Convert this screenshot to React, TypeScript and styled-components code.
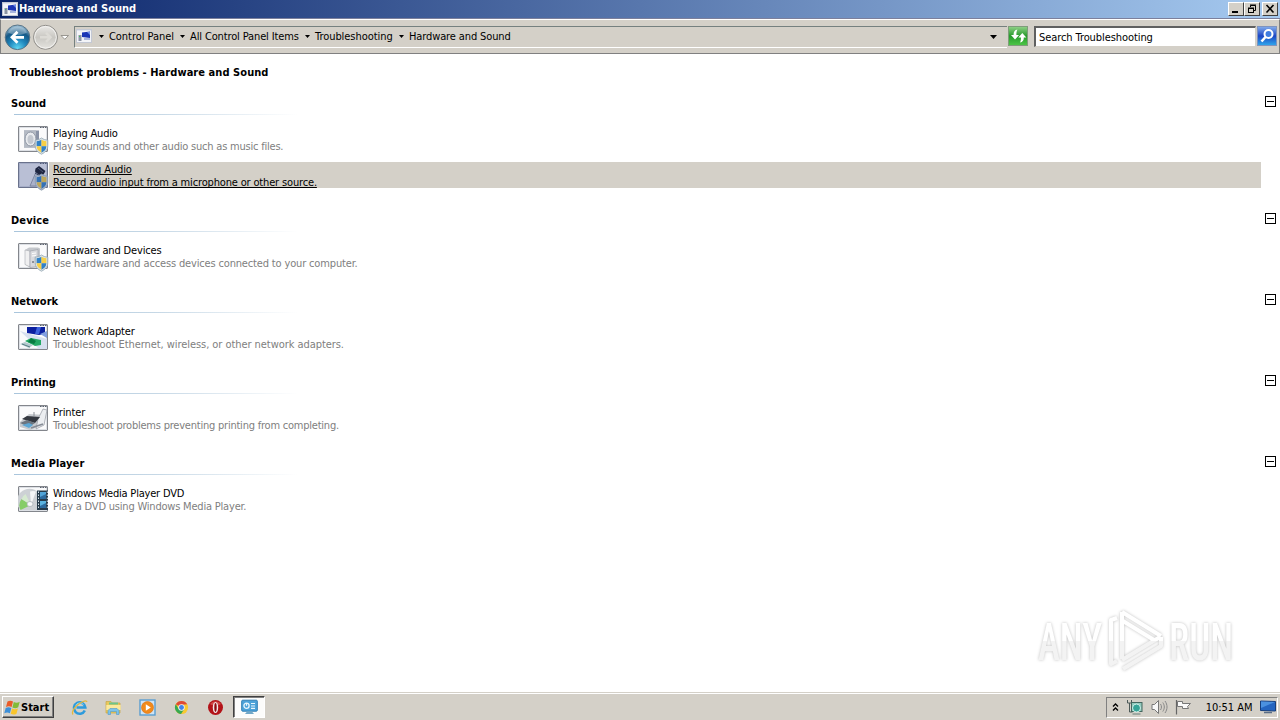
import { ReactNode } from "react";
import { createGlobalStyle, styled } from "styled-components";

type Item = {
  title: string;
  text: string;
  icon: ReactNode;
  shield?: boolean;
  selected?: boolean;
  titleSpacing?: number;
  textSpacing?: number;
};

type Section = {
  name: string;
  spacing?: number;
  items: Item[];
};

const GlobalStyle = createGlobalStyle`
  * {
    box-sizing: border-box;
  }

  body {
    margin: 0;
    overflow: hidden;
    background: #fff;
    color: #000;
    font-family: Tahoma, "DejaVu Sans Condensed", "DejaVu Sans", sans-serif;
    font-stretch: condensed;
    font-size: 11px;
    line-height: 13px;
  }
`;

const SHIELD_PATH =
  "M23.5 12c2 1.500 4 2 6.300 2.100v5.700c0 3.800-2.500 6.500-6.300 8.400-3.800-1.900-6.300-4.600-6.300-8.400v-5.700c2.300-.1 4.300-.6 6.300-2.100z";

const Shield = () => (
  <>
    <path d={SHIELD_PATH} fill="#dfe6ea" stroke="#8ea2ae" strokeWidth=".8" />
    <path d="M23.500 13.800v6.400h-4.900v-4.900c1.900-.1 3.500-.6 4.900-1.500z" fill="#3181c6" />
    <path d="M23.500 13.800v6.400h4.900v-4.900c-1.900-.1-3.500-.6-4.900-1.500z" fill="#f7cf45" />
    <path d="M18.600 20.200h4.900v6.600c-2.700-1.500-4.700-3.500-4.900-6.600z" fill="#f7cf45" />
    <path d="M28.400 20.200h-4.900v6.600c2.700-1.500 4.700-3.500 4.900-6.600z" fill="#3181c6" />
  </>
);

const WindowFrame = ({ item }: { item: Item }) => (
  <SItemIcon viewBox="0 0 31 29">
    <rect x=".5" y=".5" width="29" height="25" rx=".5" fill="#fafafb" stroke="#83868c" />
    <rect x="1.500" y="1.500" width="27" height="23" fill="none" stroke="#dde0e5" />
    <path d="M22 1.500h1.500M24.500 1.500h1.500M27 1.500h1.500" stroke="#5b626e" />
    {item.icon}
    {item.selected && (
      <rect width="30" height="26" fill="#3a4c8c" fillOpacity=".34" />
    )}
    {item.shield && <Shield />}
    {item.shield && item.selected && (
      <path d={SHIELD_PATH} fill="#3a4c8c" fillOpacity=".3" />
    )}
  </SItemIcon>
);

const SpeakerIcon = (
  <>
    <rect x="6" y="4.500" width="15" height="17" fill="#8992a6" />
    <rect x="6" y="4.500" width="12" height="17" fill="#b4bac4" />
    <ellipse cx="12.500" cy="13" rx="5.500" ry="7" fill="#e8eaee" stroke="#8f97a5" />
    <ellipse cx="12.500" cy="13.500" rx="3" ry="4.500" fill="#c3c8d0" />
  </>
);

const MicrophoneIcon = (
  <>
    <path d="M18 10l-6 14h6l5-12z" fill="#e5e6ea" stroke="#8d929d" strokeWidth=".8" />
    <path d="M17.500 6.500l3.500-2.500 6.500 5-2 3.500-4.500.5-4-3.500z" fill="#11131a" />
    <path d="M20 6l5 4" stroke="#58606c" />
    <path d="M17 11l5 3" stroke="#39404c" />
  </>
);

const ComputerIcon = (
  <>
    <path d="M7 7l4-2.500h9l2 1v18l-10 1-5-3z" fill="#c4c7cc" />
    <path d="M7 7l5 1v16l-5-2.500z" fill="#f0f0f1" stroke="#a9acb2" strokeWidth=".6" />
    <path d="M12 8l8-1.500v17l-8 1z" fill="#d9dade" stroke="#999ca4" strokeWidth=".6" />
    <path d="M14 10.500l4-.5M14 13l4-.5" stroke="#fff" />
    <circle cx="15" cy="19" r="1" fill="#757a82" />
  </>
);

const NetworkIcon = (
  <>
    <path d="M2 7l10 3 17 5v10h-8z" fill="#d7e0ef" />
    <path d="M9 3h18v7l-6 1-12-2z" fill="#0b1fa0" />
    <path d="M19 3h4l-2 7h-4z" fill="#3d62dc" />
    <path d="M22 10l7-3v7z" fill="#829fe0" />
    <path d="M7 17l6-3 10 2v5l-6 1z" fill="#24a965" />
    <path d="M13 14l5 3-2 3-6-2z" fill="#087b42" />
    <path d="M2 20l5-2 8 3-4 3z" fill="#b5c9cf" />
    <path d="M4 20l8 3" stroke="#567e83" />
  </>
);

const PrinterIcon = (
  <>
    <path d="M2 17l9-8 17 1-4 11-12 4-10-3z" fill="#c6c9ce" />
    <path d="M20 14l5-10 4 1-3 15-8 4z" fill="#eceef1" stroke="#9498a0" strokeWidth=".7" />
    <path d="M4 14l5-3 13 1-5 6z" fill="#343840" />
    <path d="M2 18l7-3 8 3-6 4z" fill="#6c7580" />
    <path d="M4 20l7-2 4 2-4 3z" fill="#5da7d5" />
    <path d="M16 7v4" stroke="#8b9098" />
    <path d="M13 23l12-4" stroke="#858b95" strokeWidth="1.500" />
  </>
);

const DvdIcon = (
  <>
    <path d="M2.500 24a11.500 11.500 0 0 1 18-17.500V24z" fill="#cdd1d5" />
    <path d="M13 19L2.500 24a11 11 0 0 1 1-11z" fill="#86cd68" />
    <path d="M13 19L3.500 13a11 11 0 0 1 4-5z" fill="#d6ead0" />
    <path d="M13 19l-1-13.500a11 11 0 0 1 6 0z" fill="#f5f6f7" />
    <ellipse cx="12" cy="18" rx="3" ry="2.500" fill="#f8f9fa" stroke="#a3aab2" strokeWidth=".7" />
    <rect x="19" y="4.500" width="11" height="19.500" fill="#253a4a" />
    <path d="M22 6h6v7h-6z" fill="#4fa3d6" />
    <path d="M22 15h6v7h-6z" fill="#5ab3df" />
    <path d="M22 11l6-3v5h-6zM22 20l6-3v5h-6z" fill="#2b6a9e" />
    <path d="M20.500 5.500v18M29.300 5.500v18" stroke="#d6e4ec" strokeDasharray="1.500 1.500" />
  </>
);

const SECTIONS: Section[] = [
  {
    name: "Sound",
    items: [
      {
        title: "Playing Audio",
        text: "Play sounds and other audio such as music files.",
        icon: SpeakerIcon,
        shield: true,
        titleSpacing: -0.2,
        textSpacing: -0.21,
      },
      {
        title: "Recording Audio",
        text: "Record audio input from a microphone or other source.",
        icon: MicrophoneIcon,
        shield: true,
        selected: true,
        titleSpacing: -0.13,
        textSpacing: -0.16,
      },
    ],
  },
  {
    name: "Device",
    spacing: 0.12,
    items: [
      {
        title: "Hardware and Devices",
        text: "Use hardware and access devices connected to your computer.",
        icon: ComputerIcon,
        shield: true,
        titleSpacing: -0.16,
        textSpacing: -0.155,
      },
    ],
  },
  {
    name: "Network",
    items: [
      {
        title: "Network Adapter",
        text: "Troubleshoot Ethernet, wireless, or other network adapters.",
        icon: NetworkIcon,
        titleSpacing: -0.13,
        textSpacing: -0.06,
      },
    ],
  },
  {
    name: "Printing",
    items: [
      {
        title: "Printer",
        text: "Troubleshoot problems preventing printing from completing.",
        icon: PrinterIcon,
        titleSpacing: -0.08,
        textSpacing: -0.22,
      },
    ],
  },
  {
    name: "Media Player",
    spacing: 0.1,
    items: [
      {
        title: "Windows Media Player DVD",
        text: "Play a DVD using Windows Media Player.",
        icon: DvdIcon,
        titleSpacing: -0.2,
        textSpacing: -0.2,
      },
    ],
  },
];

const CRUMBS = [
  { text: "Control Panel", width: 81, spacing: -0.05 },
  { text: "All Control Panel Items", width: 125, spacing: -0.13 },
  { text: "Troubleshooting", width: 94, spacing: -0.05 },
  { text: "Hardware and Sound", width: 120, spacing: -0.12 },
];

const PanelIcon = () => (
  <svg width="16" height="14" viewBox="0 0 16 14">
    <rect x=".5" y=".5" width="15" height="13" fill="#f3f4f8" stroke="#c3c8d4" />
    <path d="M1 1.500h14" stroke="#dfe4ee" />
    <path d="M6 3.500l8-1v6.500l-8-1z" fill="#1a35b5" />
    <path d="M11 3h3v3z" fill="#6f8de8" />
    <path d="M8 10h6" stroke="#8fa0d6" strokeWidth="1.500" />
    <rect x="2.500" y="6" width="3" height="6" fill="#8c94a5" />
    <path d="M3 7.500h1" stroke="#40c060" />
  </svg>
);

const Arrow = ({ width = 5 }: { width?: number }) => (
  <svg width={width} height={width > 5 ? 4 : 3} viewBox="0 0 5 3" preserveAspectRatio="none">
    <path d="M0 0h5L2.500 3z" fill="#000" />
  </svg>
);

const NavButtons = () => (
  <SNav viewBox="0 0 72 28">
    <defs>
      <radialGradient id="back" cx=".5" cy=".95" r=".9">
        <stop offset="0" stopColor="#5fd8f4" />
        <stop offset=".4" stopColor="#1f87bd" />
        <stop offset=".72" stopColor="#155886" />
        <stop offset="1" stopColor="#8fb6cf" />
      </radialGradient>
      <linearGradient id="forward" x2="0" y2="1">
        <stop offset="0" stopColor="#ebeae7" />
        <stop offset=".5" stopColor="#c9c7c2" />
        <stop offset="1" stopColor="#e6e5e1" />
      </linearGradient>
    </defs>
    <circle cx="16.500" cy="14.300" r="12.300" fill="url(#back)" stroke="#5a7486" />
    <path d="M7 9.500a10.500 10.500 0 0 1 19 0c-5 3-13 3.500-19 0z" fill="#fff" fillOpacity=".3" />
    <path
      d="M23 14.300H11.500M16.500 8.800L11 14.300l5.500 5.500"
      fill="none"
      stroke="#fff"
      strokeWidth="2.800"
    />
    <circle cx="44.500" cy="14.300" r="12" fill="url(#forward)" stroke="#918f8b" />
    <circle cx="44.500" cy="14.300" r="10.800" fill="none" stroke="#f3f2f0" />
    <path
      d="M39 14.300h10M45 9.800l4.500 4.500-4.500 4.500"
      fill="none"
      stroke="#dddbd6"
      strokeWidth="2.500"
    />
    <path d="M60 12.500h7.500L63.800 16.300z" fill="#fff" stroke="#908d87" strokeWidth=".9" />
  </SNav>
);

const WindowsFlag = () => (
  <svg width="17" height="17" viewBox="0 0 17 17">
    <path d="M3.500 2.500c2-1.300 4-1 5.500 0L7.600 8c-1.800-1-3.600-1.100-5.600 0z" fill="#ea5b28" />
    <path d="M9.800 3c1.700.9 3.700 1 5.900-.2L14.200 8.300c-2 1.200-3.900 1.100-5.800.1z" fill="#82bb37" />
    <path d="M1.700 9c2-1.200 3.900-.9 5.600 0l-1.400 5.300c-1.800-1-3.600-1-5.600 0z" fill="#3d8fd8" />
    <path d="M8.100 9.500c1.800.9 3.800 1 5.800-.1l-1.400 5.300c-2 1.200-3.900 1-5.800.1z" fill="#f9c52c" />
  </svg>
);

const ExplorerIcon = () => (
  <svg width="17" height="17" viewBox="0 0 17 17">
    <path
      d="M13.800 11.500A5.700 5.700 0 1 1 14.300 8.500H5.500"
      fill="none"
      stroke="#2e9bdc"
      strokeWidth="2.600"
    />
    <path d="M4.500 6.500a5 5 0 0 1 8-1" fill="none" stroke="#8ed7f7" />
    <path
      d="M2 15.500c-2-2.500 2-8 6.500-11C12 2 15.500 1 16 3"
      fill="none"
      stroke="#e5b83d"
      strokeWidth="1.300"
    />
  </svg>
);

const FolderIcon = () => (
  <svg width="17" height="17" viewBox="0 0 17 17">
    <path d="M1 2.500h5l1 1.500h8v10H1z" fill="#e9c95d" stroke="#c9a646" strokeWidth=".7" />
    <path d="M4 3.500h9v2H4z" fill="#6cc48b" />
    <path d="M1.300 6h14.400v5H1.300z" fill="#fbe99d" />
    <path d="M3 15.500v-4l2-2h7l2 2v4h-2.500v-3h-6v3z" fill="#7cc3ea" stroke="#4f99ca" strokeWidth=".6" />
  </svg>
);

const PlayerIcon = () => (
  <svg width="17" height="17" viewBox="0 0 17 17">
    <rect x="1" y="1" width="15" height="15" fill="#cfe4f5" stroke="#5a9ed0" strokeWidth="1.400" />
    <circle cx="8.500" cy="8.500" r="6" fill="#f18a1b" stroke="#d96e10" strokeWidth=".6" />
    <path d="M6.800 5.200l5 3.300-5 3.300z" fill="#fff" />
  </svg>
);

const ChromeIcon = () => (
  <svg width="15" height="15" viewBox="0 0 16 16">
    <circle cx="8" cy="8" r="7" fill="#f8c931" />
    <path d="M8 8L1.900 4.500A7 7 0 0 1 14.100 4.500L8 5z" fill="#df4937" />
    <path d="M1.900 4.500A7 7 0 0 0 7.500 15L11 9.500 5 9.700z" fill="#36a852" />
    <circle cx="8" cy="8" r="3.400" fill="#f4f4f4" />
    <circle cx="8" cy="8" r="2.600" fill="#4284e8" />
  </svg>
);

const OperaIcon = () => (
  <svg width="17" height="17" viewBox="0 0 17 17">
    <circle cx="8.500" cy="8.500" r="7.500" fill="#b31218" />
    <path d="M3 5a7 7 0 0 1 11 0c-3 2-8 2-11 0z" fill="#e36a68" fillOpacity=".6" />
    <ellipse cx="8.500" cy="8.500" rx="2.700" ry="5.500" fill="#f1eaea" />
    <ellipse cx="8.500" cy="8.500" rx="1.200" ry="4.400" fill="#8d0a10" />
  </svg>
);

const ControlPanelIcon = () => (
  <svg width="17" height="16" viewBox="0 0 17 16">
    <rect x=".7" y="1.200" width="15.600" height="11" rx="1" fill="#4da3d9" stroke="#317eb4" />
    <circle cx="5.500" cy="6.700" r="2.600" fill="none" stroke="#e8f6fd" strokeWidth="1.300" />
    <path d="M5.500 6.700V4M10 4.500h4M10 7h4M10 9.300h4" stroke="#e8f6fd" strokeWidth="1.200" />
    <path d="M6 12.500h5l2 2.500H4z" fill="#71a7c8" />
  </svg>
);

const Watermark = () => (
  <SWatermark viewBox="0 0 260 80">
    <defs>
      <linearGradient id="mark" gradientUnits="userSpaceOnUse" x1="0" y1="10" x2="0" y2="70">
        <stop offset=".51" stopColor="#fff" />
        <stop offset=".51" stopColor="#f3f3f3" />
      </linearGradient>
    </defs>
    <g fill="url(#mark)">
      <text x="18" y="60" textLength="64" lengthAdjust="spacingAndGlyphs">
        ANY
      </text>
      <text x="149" y="60" textLength="64" lengthAdjust="spacingAndGlyphs">
        RUN
      </text>
      <g fill="none" stroke="url(#mark)" strokeWidth="4" strokeLinejoin="round">
        <path d="M102 12v47M102 12l39 24M103 21l31 19" />
        <path d="M97 18l-6 2v44l6-3M102 60l38-23M103 69l38-23v-9" />
      </g>
    </g>
  </SWatermark>
);

export default function App() {
  return (
    <SDesktop>
      <GlobalStyle />
      <STitleBar>
        <PanelIcon />
        <STitle>Hardware and Sound</STitle>
        <SWindowButton>
          <svg width="12" height="10">
            <path d="M2 8h6" stroke="#000" strokeWidth="2" />
          </svg>
        </SWindowButton>
        <SWindowButton>
          <svg width="12" height="10">
            <path d="M4.500 3V1.500h5v5H8M4 1h6M2 4h6" fill="none" stroke="#000" />
            <rect x="2.500" y="4.500" width="5" height="4" fill="none" stroke="#000" />
          </svg>
        </SWindowButton>
        <SWindowButton $last>
          <svg width="12" height="10">
            <path d="M2.500 1l7 7.500M9.500 1l-7 7.500" stroke="#000" strokeWidth="1.600" />
          </svg>
        </SWindowButton>
      </STitleBar>

      <SToolbar>
        <NavButtons />
        <SAddress>
          <SAddressIcon>
            <PanelIcon />
          </SAddressIcon>
          {CRUMBS.map(({ text, width, spacing }) => (
            <SCrumb key={text} $width={width}>
              <Arrow />
              <SText $spacing={spacing}>{text}</SText>
            </SCrumb>
          ))}
          <SDropdown>
            <Arrow width={7} />
          </SDropdown>
        </SAddress>
        <SRefresh>
          <svg width="18" height="18" viewBox="0 0 18 18">
            <path d="M8.500 2.500C5.500 3 4.500 5 4.600 8H2l4 4.500L10 8H7.400c-.1-2.300.2-3.800 1.100-5.500z" fill="#fff" />
            <path d="M11 15.500c1-1.500 1-3.500.9-5H9.300l4-4.500 4 4.500h-2.500c.1 2.800-1 4.500-3.800 5z" fill="#fff" />
          </svg>
        </SRefresh>
        <SSearch>
          <SText $spacing={-0.08}>Search Troubleshooting</SText>
        </SSearch>
        <SSearchButton>
          <svg width="18" height="18" viewBox="0 0 18 18">
            <circle cx="10.500" cy="7" r="4" fill="#3f7ce0" stroke="#fff" strokeWidth="2" />
            <path d="M7.500 10L3.500 14.500" stroke="#fff" strokeWidth="2.600" />
          </svg>
        </SSearchButton>
      </SToolbar>

      <SContent>
        <SHeading>Troubleshoot problems - Hardware and Sound</SHeading>
        {SECTIONS.map((section) => (
          <SSection key={section.name}>
            <SSectionHeader>
              <SText $spacing={section.spacing}>{section.name}</SText>
              <SToggle />
            </SSectionHeader>
            <SLine />
            <SItems>
              {section.items.map((item) => (
                <SItem key={item.title}>
                  <WindowFrame item={item} />
                  <SItemBody $selected={item.selected}>
                    <SText $spacing={item.titleSpacing}>{item.title}</SText>
                    <SDescription
                      $spacing={item.textSpacing}
                      $selected={item.selected}
                    >
                      {item.text}
                    </SDescription>
                  </SItemBody>
                </SItem>
              ))}
            </SItems>
          </SSection>
        ))}
        <Watermark />
      </SContent>

      <STaskbar>
        <SStart>
          <WindowsFlag />
          <span>Start</span>
        </SStart>
        <SQuickLaunch>
          <ExplorerIcon />
          <FolderIcon />
          <PlayerIcon />
          <ChromeIcon />
          <OperaIcon />
        </SQuickLaunch>
        <STask>
          <ControlPanelIcon />
        </STask>
        <STray>
          <svg width="7" height="9" viewBox="0 0 7 9">
            <path d="M1 3.500L3.500 1 6 3.500M1 7.500L3.500 5 6 7.500" fill="none" stroke="#000" strokeWidth="1.300" />
          </svg>
          <svg width="17" height="16" viewBox="0 0 17 16">
            <path d="M1.500 1v3h4V1M3.500 4v9h3" fill="none" stroke="#4d5a58" />
            <rect x="5.500" y="3.500" width="10.500" height="9" fill="#8fc9bb" stroke="#44665f" />
            <circle cx="10.500" cy="9" r="4" fill="#36a497" stroke="#d0eee8" />
            <path d="M6.500 15h8" stroke="#69807b" />
          </svg>
          <svg width="17" height="16" viewBox="0 0 17 16">
            <path d="M1 5.500h2.500l4-4v13l-4-4H1z" fill="#f7f7f7" stroke="#777" />
            <path d="M9.500 5c1.300 2 1.300 4 0 6M11.800 3.500c2 3 2 6 0 9M14 2c2.700 4 2.700 8 0 12" fill="none" stroke="#888" />
          </svg>
          <svg width="17" height="16" viewBox="0 0 17 16">
            <path d="M1.500 1v14.500" stroke="#666" strokeWidth="1.200" />
            <path d="M2.500 2.500h5v2h8l-3 3 1 2H7.500v-2h-5z" fill="#fafafa" stroke="#777" />
          </svg>
          <SClock>10:51 AM</SClock>
          <svg width="16" height="14" viewBox="0 0 16 14">
            <path d="M.5 1l15 .5v9.500l-15-.5z" fill="#2465c0" stroke="#173f7c" />
            <path d="M1 1.500l14 .5-14 6z" fill="#4b91df" />
            <path d="M4 12.500h8" stroke="#5a6d86" strokeWidth="1.500" />
          </svg>
        </STray>
      </STaskbar>
    </SDesktop>
  );
}

const SDesktop = styled.div`
  width: 100vw;
  height: 100vh;
  display: flex;
  flex-direction: column;
`;

const SText = styled.span<{ $spacing?: number }>`
  white-space: nowrap;
  letter-spacing: ${({ $spacing }) => $spacing ?? 0}px;
`;

const STitleBar = styled.div`
  flex: none;
  height: 19px;
  display: flex;
  align-items: center;
  padding: 0 2px 1px;
  background: linear-gradient(to right, #0a246a, #a6caf0);
  border-bottom: 1px solid #7c809c;
`;

const STitle = styled.div`
  flex: 1;
  padding-left: 1px;
  color: #fff;
  font-weight: bold;
`;

const SWindowButton = styled.div<{ $last?: boolean }>`
  width: 16px;
  height: 14px;
  margin-left: ${({ $last }) => ($last ? 2 : 0)}px;
  display: flex;
  align-items: center;
  justify-content: center;
  background: #d4d0c8;
  border: 1px solid;
  border-color: #fff #404040 #404040 #fff;
`;

const SToolbar = styled.div`
  flex: none;
  height: 35px;
  display: flex;
  align-items: flex-start;
  padding: 6px 1px 0 0;
  background: #d4d0c8;
  border: 1px solid #808080;
  border-top-color: #fff;
`;

const SNav = styled.svg`
  flex: none;
  width: 72px;
  height: 28px;
  margin-top: -3px;
`;

const SAddress = styled.div`
  flex: 1;
  height: 22px;
  margin-left: 1px;
  padding-bottom: 2px;
  display: flex;
  align-items: center;
  border: solid;
  border-width: 1px 0 1px 1px;
  border-color: #75807f #fff #fff #75807f;
`;

const SAddressIcon = styled.div`
  width: 24px;
  padding-left: 1px;
  display: flex;
`;

const SCrumb = styled.div<{ $width: number }>`
  flex: none;
  width: ${({ $width }) => $width}px;
  display: flex;
  align-items: center;
  column-gap: 5px;
`;

const SDropdown = styled.div`
  margin-left: auto;
  padding: 1px 10px 0 0;
  display: flex;
`;

const SRefresh = styled.div`
  width: 20px;
  height: 20px;
  margin-left: 1px;
  display: flex;
  align-items: center;
  justify-content: center;
  background: linear-gradient(#8ccf84, #279a2b 50%, #4cc446);
  border: 1px solid #7f9c7b;
`;

const SSearch = styled.div`
  width: 222px;
  height: 21px;
  margin-left: 6px;
  padding: 3px;
  background: #fff;
  border: solid;
  border-width: 2px 1px 1px 2px;
  border-color: #606060 #d4d0c8 #d4d0c8 #606060;
`;

const SSearchButton = styled.div`
  width: 20px;
  height: 20px;
  margin: 0 1px;
  display: flex;
  align-items: center;
  justify-content: center;
  background: linear-gradient(#7fa8ea, #1c45c4 50%, #2fa4ea);
  border: 1px solid #7f93bd;
`;

const SContent = styled.div`
  flex: 1;
  position: relative;
  padding: 12px 3px 0 10px;
`;

const SHeading = styled.div`
  margin: 0 0 17px -0.5px;
  font-weight: bold;
  letter-spacing: 0.06px;
`;

const SSection = styled.div`
  margin-bottom: 25px;
`;

const SSectionHeader = styled.div`
  height: 14px;
  padding: 1px 0 0 1px;
  display: flex;
  justify-content: space-between;
  font-weight: bold;
`;

const SToggle = styled.div`
  width: 11px;
  height: 11px;
  margin: -1px 1px 0 0;
  display: flex;
  align-items: center;
  justify-content: center;
  border: 1px solid #000;

  &::before {
    content: "";
    width: 7px;
    height: 1px;
    background: #000;
  }
`;

const SLine = styled.div`
  width: 284px;
  height: 1px;
  margin: 4px 0 11px 4px;
  background: linear-gradient(to right, #a9c5dc, #c6d8e6 50%, #fff);
`;

const SItems = styled.div`
  display: flex;
  flex-direction: column;
  row-gap: 10px;
`;

const SItem = styled.div`
  height: 26px;
  padding: 0 16px 0 8px;
  display: flex;
`;

const SItemIcon = styled.svg`
  flex: none;
  width: 31px;
  height: 29px;
`;

const SItemBody = styled.div<{ $selected?: boolean }>`
  flex: 1;
  height: 26px;
  padding: 1px 0 0 4px;
  display: flex;
  flex-direction: column;
  align-items: flex-start;
  background-color: ${({ $selected }) => ($selected ? "#d4d0c8" : "transparent")};
  text-decoration: ${({ $selected }) => ($selected ? "underline" : "none")};
  text-decoration-skip-ink: none;
`;

const SDescription = styled(SText)<{ $selected?: boolean }>`
  color: ${({ $selected }) => ($selected ? "#000" : "#808080")};
`;

const SWatermark = styled.svg`
  position: absolute;
  top: 546px;
  left: 1020px;
  width: 260px;
  height: 80px;
  font-family: Roboto, sans-serif;
  font-size: 52px;
  font-weight: 500;
  filter: drop-shadow(0 0 1.5px rgba(0, 0, 0, 0.25));
`;

const STaskbar = styled.div`
  flex: none;
  height: 28px;
  display: flex;
  align-items: center;
  padding: 2px 2px 0;
  background: #d4d0c8;
  box-shadow: inset 0 1px #d4d0c8, inset 0 2px #fff;
`;

const SStart = styled.div`
  width: 52px;
  height: 22px;
  padding-left: 1px;
  display: flex;
  align-items: center;
  border: 1px solid;
  border-color: #fff #404040 #404040 #fff;
  box-shadow: inset -1px -1px #808080;
  font-weight: bold;
`;

const SQuickLaunch = styled.div`
  width: 169px;
  margin: 0 1px 0 9px;
  display: grid;
  grid-template-columns: repeat(5, 1fr);
  align-items: center;
  justify-items: center;
`;

const STask = styled.div`
  width: 32px;
  height: 22px;
  display: flex;
  align-items: center;
  justify-content: center;
  background: #fcfcfb;
  border: 1px solid;
  border-color: #404040 #fff #fff #404040;
  box-shadow: inset 1px 1px #808080;
`;

const STray = styled.div`
  width: 172px;
  height: 21px;
  margin-left: auto;
  padding: 0 1px 0 5px;
  display: flex;
  align-items: center;
  justify-content: space-between;
  border: 1px solid;
  border-color: #808080 #fff #fff #808080;
`;

const SClock = styled.span`
  margin-left: 6px;
`;
